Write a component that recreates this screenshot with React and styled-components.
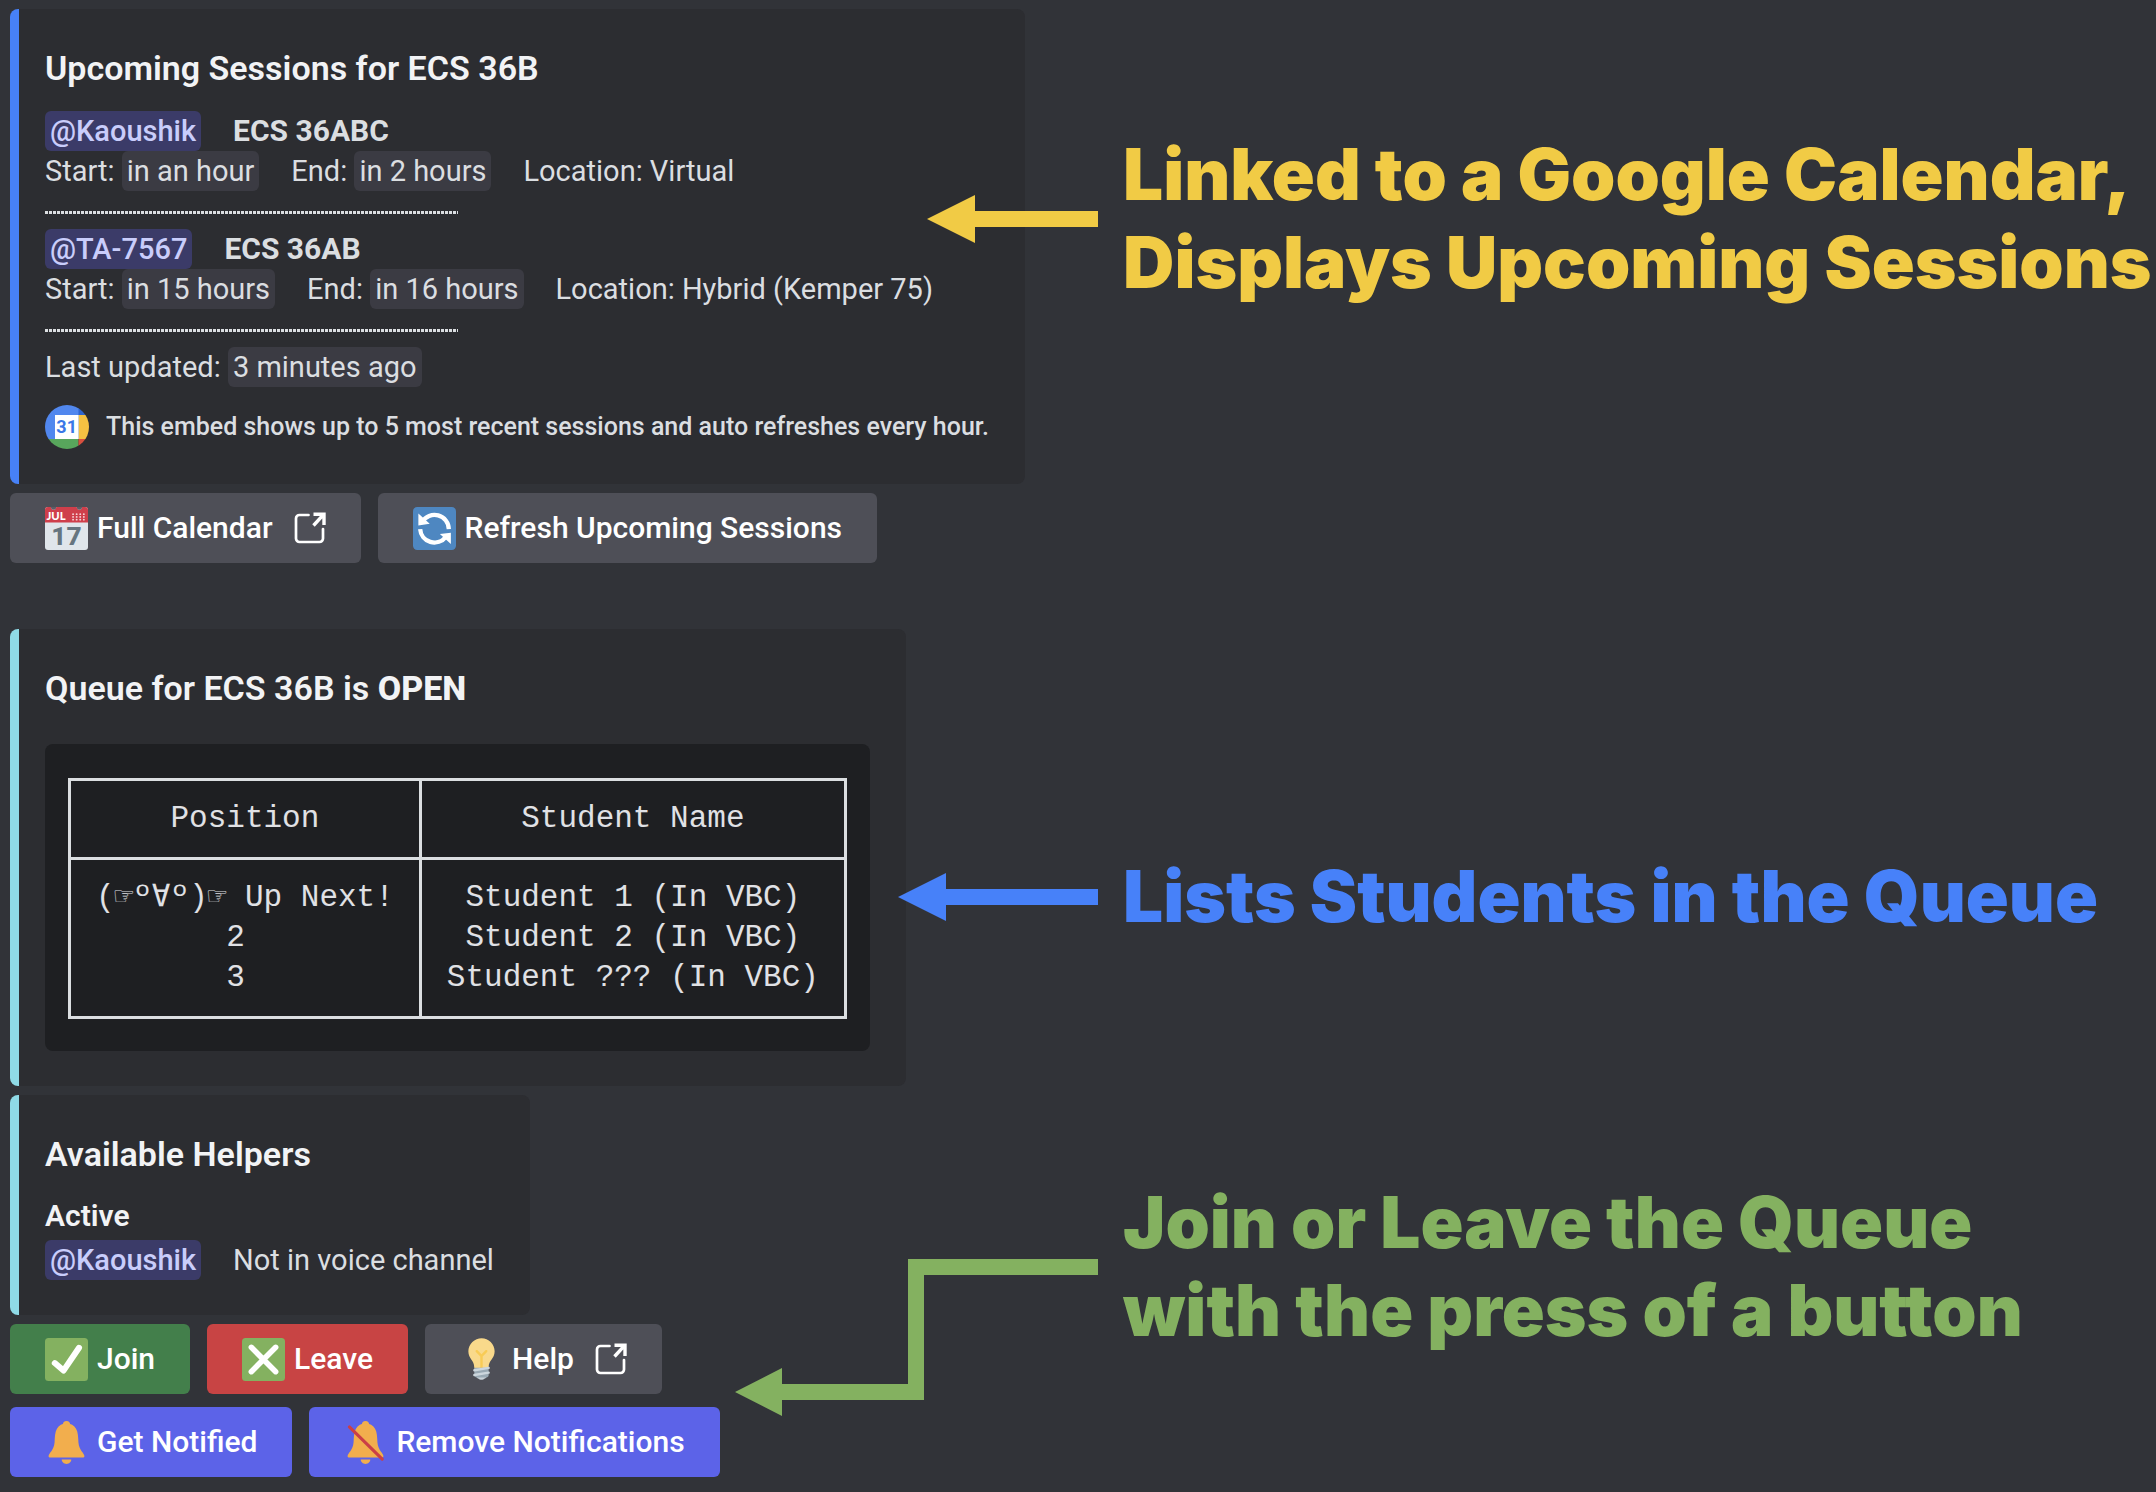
import React from "react";
import styled, { createGlobalStyle, css } from "styled-components";

const GlobalStyle = createGlobalStyle`
  *, *::before, *::after { box-sizing: border-box; }
  body {
    margin: 0;
    background: #313338;
    color: #dbdee1;
    font: 400 29px/40px Roboto, sans-serif;
  }
  h1, h2, h3, p { margin: 0; }
`;

const Page = styled.main`
  padding: 9px 0 14px;
`;

const Section = styled.section`
  display: grid;
  grid-template-columns: 52% 48%;
  align-items: start;
  margin-bottom: ${(p) => p.$gap}px;
`;

const Panel = styled.div`
  display: flex;
  flex-direction: column;
  align-items: flex-start;
  gap: 9px;
  padding-left: 10px;
`;

const Embed = styled.article`
  padding: 35px 36px 35px 26px;
  border-left: 9px solid ${(p) => p.$accent};
  border-radius: 8px;
  background: #2c2d31;
`;

const Title = styled.h2`
  margin-bottom: ${(p) => p.$space}px;
  color: #f2f3f5;
  font-size: 34px;
  line-height: 48px;
  font-weight: 600;

  strong { font-weight: 800; }
`;

const FieldName = styled.h3`
  margin-bottom: 5px;
  color: #f2f3f5;
  font-size: 30px;
  line-height: 38px;
  font-weight: 600;
`;

const Line = styled.div`
  display: flex;
  gap: 32px;
  white-space: nowrap;

  strong { font-size: 30px; font-weight: 700; }
`;

const pill = css`
  padding: 3px 5px;
  border-radius: 6px;
`;

const Mention = styled.a`
  ${pill}
  background: #3b3b68;
  color: #c9cdfb;
  font-weight: 500;
  text-decoration: none;
`;

const Time = styled.time`
  ${pill}
  background: #3b3b43;
`;

const Divider = styled.hr`
  width: 413px;
  height: 3px;
  margin: 20px 0 15px;
  border: 0;
  background: repeating-linear-gradient(to right, #dbdee1 0 3px, #2c2d31 3px 4px);
`;

const Footer = styled.footer`
  display: flex;
  align-items: center;
  gap: 17px;
  margin-top: 18px;
  font-size: 25px;
  line-height: 44px;
  font-weight: 500;
  white-space: nowrap;
`;

const Actions = styled.div`
  display: grid;
  gap: 13px;
`;

const ActionRow = styled.div`
  display: flex;
  gap: 17px;
`;

const tones = {
  grey: "#4e4f57",
  green: "#437f4b",
  red: "#c84444",
  blurple: "#5c63e8",
};

const Action = styled.button`
  display: flex;
  align-items: center;
  gap: 9px;
  height: 70px;
  padding: 0 35px;
  border: 0;
  border-radius: 6px;
  background: ${(p) => tones[p.$tone]};
  color: #fff;
  font: 500 30px/40px Roboto, sans-serif;
  text-decoration: none;
  white-space: nowrap;
  cursor: pointer;
`;

const Emoji = styled.svg`
  width: 43px;
  height: 43px;
  flex: none;
`;

const LinkMark = styled.svg`
  width: 32px;
  height: 32px;
  flex: none;
  margin-left: 12px;
`;

const Avatar = styled.svg`
  width: 44px;
  height: 44px;
  flex: none;
`;

const CodeBlock = styled.div`
  padding: 34px 23px 32px;
  border-radius: 8px;
  background: #1e1f22;
`;

const QueueTable = styled.table`
  border-collapse: collapse;
  border: 3px solid #dbdee1;
  color: #e0e1e5;
  font: 400 31px/40px "Liberation Mono", "DejaVu Sans Mono", monospace;
  text-align: center;
  white-space: pre;

  th, td {
    padding: 0 25px;
    border-left: 3px solid #dbdee1;
    font-weight: 400;
  }
  th {
    padding: 18px 25px;
    border-bottom: 3px solid #dbdee1;
  }
  tbody tr:first-child td { padding-top: 18px; }
  tbody tr:last-child td { padding-bottom: 18px; }
`;

const Callout = styled.div`
  position: relative;
  margin-top: ${(p) => p.$top}px;
  padding-left: 2px;
  color: ${(p) => p.$color};
`;

const CalloutText = styled.h1`
  font: 900 71px/88px Inter, sans-serif;
  white-space: nowrap;
`;

const Arrow = styled.svg`
  position: absolute;
  right: 100%;
  top: calc(50% - ${(p) => p.$rise}px);
  margin-right: 23px;
  fill: currentColor;
`;

function StraightArrow({ length }) {
  return (
    <Arrow $rise={23} width={length} height="48" aria-hidden="true">
      <path d={`M0 24 48 0V16H${length}V32H48V48Z`} />
    </Arrow>
  );
}

function ElbowArrow() {
  return (
    <Arrow $rise={7} width="363" height="157" aria-hidden="true">
      <path d="M0 133 47 109V125H173V0H363V16H189V141H47V157Z" />
    </Arrow>
  );
}

function GoogleCalendarIcon() {
  return (
    <Avatar viewBox="0 0 44 44" aria-hidden="true">
      <clipPath id="avatar"><circle cx="22" cy="22" r="22" /></clipPath>
      <g clipPath="url(#avatar)">
        <path fill="#5187ee" d="M0 0h34v34H0z" />
        <path fill="#2f64cd" d="M33.5 0H44v10H33.5z" />
        <path fill="#f5c142" d="M33.5 10H44v24H33.5z" />
        <path fill="#58a65c" d="M0 34h33.5v10H0z" />
        <path fill="#d8503f" d="M33.5 34H44v10H33.5z" />
        <path fill="#fff" d="M10 10h23.5v24H10z" />
        <text x="21.7" y="28" fill="#3b78e7" fontFamily="Roboto, sans-serif" fontSize="18" fontWeight="700" textAnchor="middle">31</text>
      </g>
    </Avatar>
  );
}

function CalendarIcon() {
  return (
    <Emoji viewBox="0 0 36 36" aria-hidden="true">
      <rect width="36" height="36" rx="2.5" fill="#e0e6eb" />
      <path fill="#cf3f4b" d="M2.5 0H5a2.2 2.2 0 0 0 4.4 0H26.6a2.2 2.2 0 0 0 4.4 0h2.5A2.5 2.5 0 0 1 36 2.5V13H0V2.5A2.5 2.5 0 0 1 2.5 0Z" />
      <path fill="#5b5d66" d="M5 0h4.4a2.2 2.2 0 0 1-4.4 0ZM26.6 0H31a2.2 2.2 0 0 1-4.4 0Z" />
      <text x="1.2" y="10.9" fill="#fff" fontFamily="Lato, sans-serif" fontSize="9.4" fontWeight="900">JUL</text>
      <g fill="#f6d5d8">
        {[6, 8.3, 10.6].map((y) =>
          [23.5, 26.5, 29.5, 32.5].map((x) => <circle key={`${x}-${y}`} cx={x} cy={y} r="0.8" />)
        )}
      </g>
      <text x="18" y="32" fill="#66757f" fontFamily="Roboto, sans-serif" fontSize="22" fontWeight="800" textAnchor="middle">17</text>
    </Emoji>
  );
}

function RefreshIcon() {
  return (
    <Emoji viewBox="0 0 36 36" aria-hidden="true">
      <rect width="36" height="36" rx="3.5" fill="#4e87c1" />
      <g fill="none" stroke="#fff" strokeWidth="3.6">
        <path d="M7.7 12.5A12 12 0 0 1 30 18.5" />
        <path d="M6 18.5A12 12 0 0 0 27.5 25" />
      </g>
      <path fill="#fff" d="M4.5 5.5V15.5L14 14ZM31.7 21.5 22.5 22.7 31.7 31Z" />
    </Emoji>
  );
}

function CheckIcon() {
  return (
    <Emoji viewBox="0 0 36 36" aria-hidden="true">
      <rect width="36" height="36" rx="3" fill="#84b160" />
      <path d="M8.2 21 15.5 27.3 28.5 8.2" fill="none" stroke="#fff" strokeWidth="5" strokeLinecap="round" strokeLinejoin="round" />
    </Emoji>
  );
}

function CrossIcon() {
  return (
    <Emoji viewBox="0 0 36 36" aria-hidden="true">
      <rect width="36" height="36" rx="3" fill="#84b160" />
      <path d="M7.8 7.8 28.2 28.2M28.2 7.8 7.8 28.2" stroke="#fff" strokeWidth="4.6" strokeLinecap="round" />
    </Emoji>
  );
}

function BulbIcon() {
  return (
    <Emoji viewBox="0 0 36 36" aria-hidden="true">
      <path fill="#f9d98b" d="M29 11.06c0 6.439-5 7.439-5 13.44 0 3.098-3.123 3.359-5.5 3.359-2.053 0-6.586-.779-6.586-3.361C11.914 18.5 7 17.5 7 11.06 7 5.029 12.285.14 18.083.14 23.883.14 29 5.029 29 11.06z" />
      <path fill="#c7d1d9" d="M22.167 32.5c0 .828-2.234 2.5-4.167 2.5-1.933 0-4.167-1.672-4.167-2.5 0-.828 2.233-.5 4.167-.5 1.933 0 4.167-.328 4.167.5z" />
      <path fill="#f8cb55" d="M22.707 10.293c-.391-.391-1.023-.391-1.414 0L18 13.586l-3.293-3.293c-.391-.391-1.023-.391-1.414 0s-.391 1.023 0 1.414L17 15.414V26c0 .553.448 1 1 1s1-.447 1-1V15.414l3.707-3.707c.391-.391.391-1.023 0-1.414z" />
      <path fill="#99a9b4" d="M24 31c0 1.104-.896 2-2 2h-8c-1.104 0-2-.896-2-2v-6h12v6z" />
      <path d="M12 27 24 25M12 31 24 29" stroke="#ccd6dd" strokeWidth="2" strokeLinecap="round" />
    </Emoji>
  );
}

function BellIcon({ muted }) {
  return (
    <Emoji viewBox="0 0 36 36" aria-hidden="true">
      <g fill="#f2ae4d">
        <circle cx="18" cy="3" r="3" />
        <path d="M33 29.5c0 .7-.5 1-1.5 1h-27c-1 0-1.5-.3-1.5-1C3 27 7.5 24.5 8 18c.3-5 .3-8.5 2-11.5C11.5 3.5 14.5 2 18 2s6.5 1.5 8 4.5c1.7 3 1.7 6.5 2 11.5.5 6.5 5 9 5 11.5z" />
        <path d="M14 32.3h8c0 2-1.8 3.7-4 3.7s-4-1.7-4-3.7z" />
      </g>
      {muted && <path d="M4.5 5 32 32" stroke="#cb3f47" strokeWidth="2.6" strokeLinecap="round" />}
    </Emoji>
  );
}

function ExternalIcon() {
  return (
    <LinkMark viewBox="0 0 32 32" fill="none" stroke="#fff" strokeWidth="2.7" aria-hidden="true">
      <path strokeLinecap="round" d="M14.5 3H5.5A3.5 3.5 0 0 0 2 6.5v20A3.5 3.5 0 0 0 5.5 30h20a3.5 3.5 0 0 0 3.5-3.5V17" />
      <path strokeWidth="3.4" d="M19.5 2.2H30V13M29 3.2 19.5 13.5" />
    </LinkMark>
  );
}

const sessions = [
  { helper: "@Kaoushik", course: "ECS 36ABC", start: "in an hour", end: "in 2 hours", location: "Virtual" },
  { helper: "@TA-7567", course: "ECS 36AB", start: "in 15 hours", end: "in 16 hours", location: "Hybrid (Kemper 75)" },
];

const queue = [
  ["(☞º∀º)☞ Up Next!", "Student 1 (In VBC)"],
  ["2 ", "Student 2 (In VBC)"],
  ["3 ", "Student ??? (In VBC)"],
];

export default function App() {
  return (
    <>
      <GlobalStyle />
      <Page>
        <Section $gap={66}>
          <Panel>
            <Embed $accent="#4781f7">
              <Title $space={19}>Upcoming Sessions for ECS 36B</Title>
              {sessions.map((s) => (
                <React.Fragment key={s.helper}>
                  <Line>
                    <span><Mention href="#helper">{s.helper}</Mention></span>
                    <strong>{s.course}</strong>
                  </Line>
                  <Line>
                    <span>Start: <Time>{s.start}</Time></span>
                    <span>End: <Time>{s.end}</Time></span>
                    <span>Location: {s.location}</span>
                  </Line>
                  <Divider />
                </React.Fragment>
              ))}
              <p>Last updated: <Time>3 minutes ago</Time></p>
              <Footer>
                <GoogleCalendarIcon />
                This embed shows up to 5 most recent sessions and auto refreshes every hour.
              </Footer>
            </Embed>
            <Actions>
              <ActionRow>
                <Action as="a" href="#calendar" $tone="grey"><CalendarIcon />Full Calendar<ExternalIcon /></Action>
                <Action type="button" $tone="grey"><RefreshIcon />Refresh Upcoming Sessions</Action>
              </ActionRow>
            </Actions>
          </Panel>
          <Callout $top={121} $color="#f1cb45">
            <StraightArrow length={171} />
            <CalloutText>Linked to a Google Calendar,<br />Displays Upcoming Sessions</CalloutText>
          </Callout>
        </Section>

        <Section $gap={9}>
          <Panel>
            <Embed $accent="#8fdae6">
              <Title $space={32}>Queue for ECS 36B is <strong>OPEN</strong></Title>
              <CodeBlock>
                <QueueTable>
                  <thead>
                    <tr><th scope="col">Position</th><th scope="col">Student Name</th></tr>
                  </thead>
                  <tbody>
                    {queue.map(([position, name]) => (
                      <tr key={position}><td>{position}</td><td>{name}</td></tr>
                    ))}
                  </tbody>
                </QueueTable>
              </CodeBlock>
            </Embed>
          </Panel>
          <Callout $top={223} $color="#4781f9">
            <StraightArrow length={200} />
            <CalloutText>Lists Students in the Queue</CalloutText>
          </Callout>
        </Section>

        <Section $gap={0}>
          <Panel>
            <Embed $accent="#8fdae6">
              <Title $space={19}>Available Helpers</Title>
              <FieldName>Active</FieldName>
              <Line>
                <span><Mention href="#helper">@Kaoushik</Mention></span>
                <span>Not in voice channel</span>
              </Line>
            </Embed>
            <Actions>
              <ActionRow>
                <Action type="button" $tone="green"><CheckIcon />Join</Action>
                <Action type="button" $tone="red"><CrossIcon />Leave</Action>
                <Action as="a" href="#help" $tone="grey"><BulbIcon />Help<ExternalIcon /></Action>
              </ActionRow>
              <ActionRow>
                <Action type="button" $tone="blurple"><BellIcon />Get Notified</Action>
                <Action type="button" $tone="blurple"><BellIcon muted />Remove Notifications</Action>
              </ActionRow>
            </Actions>
          </Panel>
          <Callout $top={83} $color="#84b160">
            <ElbowArrow />
            <CalloutText>Join or Leave the Queue<br />with the press of a button</CalloutText>
          </Callout>
        </Section>
      </Page>
    </>
  );
}
